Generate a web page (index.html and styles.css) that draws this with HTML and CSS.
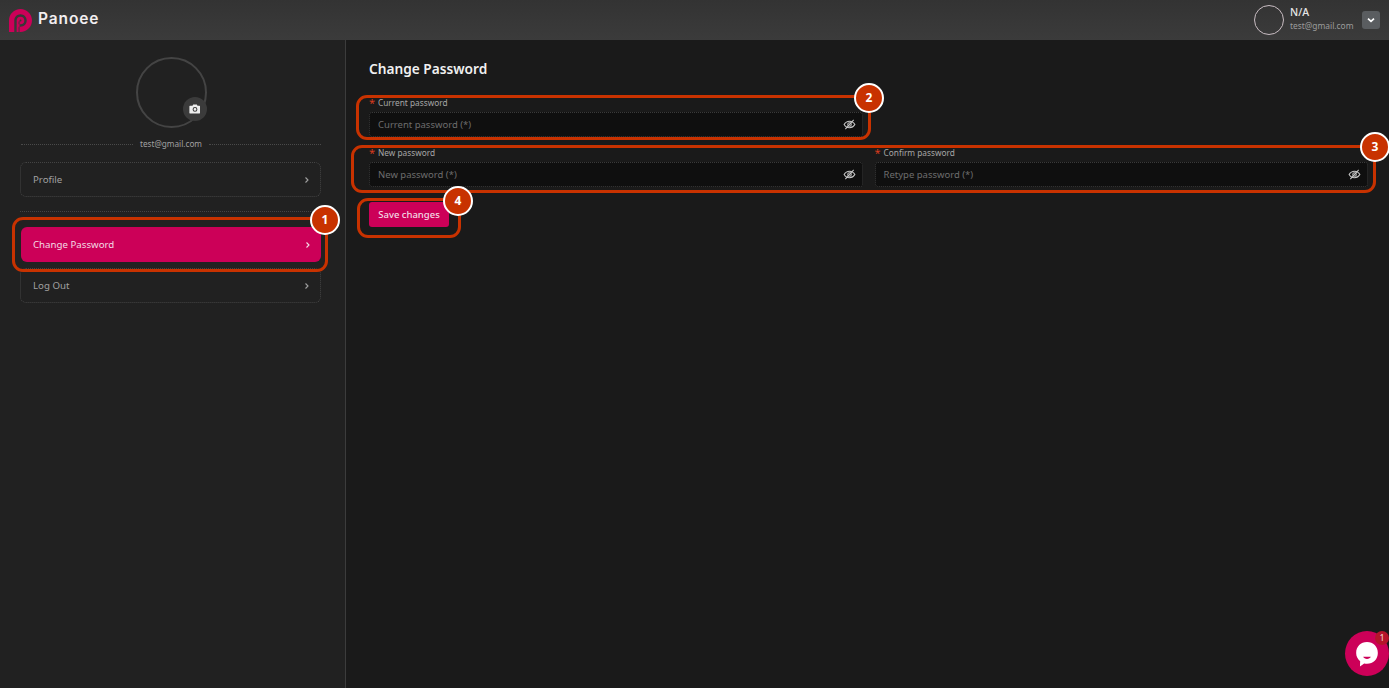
FILE: index.html
```html
<!DOCTYPE html>
<html lang="en">
<head>
<meta charset="utf-8">
<title>Panoee - Change Password</title>
<link rel="stylesheet" href="styles.css">
</head>
<body>
<header class="topbar">
  <div class="brand">
    <svg class="brand-logo" viewBox="0 0 24 24" aria-hidden="true">
      <path fill="#cc0058" fill-rule="evenodd" d="M0 24V12C0 5.400 5.300 0 12 0s12 5.400 12 12-5.400 12-12 12h-2v-5.500h2c3.600 0 6.500-2.900 6.500-6.500S15.600 5.500 12 5.500 5.500 8.400 5.500 12v12zM12 8a4 4 0 0 1 0 8h-2v-3h2a1 1 0 0 0 0-2 1 1 0 0 0-1 1v12H8V12a4 4 0 0 1 4-4z"/>
    </svg>
    <span class="brand-name">Panoee</span>
  </div>
  <div class="account">
    <span class="account-avatar"></span>
    <div class="account-text">
      <span class="account-name">N/A</span>
      <span class="account-mail">test@gmail.com</span>
    </div>
    <button class="account-toggle" type="button" aria-label="Account menu">
      <svg viewBox="0 0 10 10" aria-hidden="true"><path d="M2.500 3.800 5 6.200l2.500-2.400" fill="none" stroke="#fff" stroke-width="1.400"/></svg>
    </button>
  </div>
</header>

<div class="shell">
  <aside class="sidebar">
    <div class="avatar">
      <span class="avatar-camera">
        <svg viewBox="0 0 12 12" aria-hidden="true"><path fill="#eee" fill-rule="evenodd" d="M4.200 1.500h3.600l.7 1.200h2c.3 0 .5.2.5.5v6.800c0 .3-.2.5-.5.5H.9c-.3 0-.5-.2-.5-.5V3.200c0-.3.2-.5.5-.5h2.600zM6 4a2.400 2.400 0 1 0 0 4.800A2.400 2.400 0 0 0 6 4zm0 1a1.400 1.400 0 1 1 0 2.800A1.400 1.400 0 0 1 6 5z"/></svg>
      </span>
    </div>
    <div class="divider"><span>test@gmail.com</span></div>
    <nav class="menu">
      <a class="menu-item menu-profile">Profile<svg class="chev" viewBox="0 0 8 10" aria-hidden="true"><path d="M2.500 2.500 5 5 2.500 7.500"/></svg></a>
      <span class="menu-rule"></span>
      <a class="menu-item menu-active">Change Password<svg class="chev" viewBox="0 0 8 10" aria-hidden="true"><path d="M2.500 2.500 5 5 2.500 7.500"/></svg></a>
      <a class="menu-item menu-logout">Log Out<svg class="chev" viewBox="0 0 8 10" aria-hidden="true"><path d="M2.500 2.500 5 5 2.500 7.500"/></svg></a>
    </nav>
  </aside>

  <main class="content">
    <h1 class="title">Change Password</h1>
    <form class="form">
      <div class="row">
        <div class="field">
          <label class="label"><i>*</i>Current password</label>
          <div class="input"><span>Current password (*)</span>
            <svg class="eye" viewBox="0 0 14 14" aria-hidden="true"><path d="M1.200 7S3.200 3.500 7 3.500 12.800 7 12.800 7 10.800 10.500 7 10.500 1.200 7 1.200 7z"/><circle cx="7" cy="7" r="1.900"/><path d="M2.500 12 11.500 2"/></svg>
          </div>
        </div>
        <div class="field"></div>
      </div>
      <div class="row">
        <div class="field">
          <label class="label"><i>*</i>New password</label>
          <div class="input"><span>New password (*)</span>
            <svg class="eye" viewBox="0 0 14 14" aria-hidden="true"><path d="M1.200 7S3.200 3.500 7 3.500 12.800 7 12.800 7 10.800 10.500 7 10.500 1.200 7 1.200 7z"/><circle cx="7" cy="7" r="1.900"/><path d="M2.500 12 11.500 2"/></svg>
          </div>
        </div>
        <div class="field">
          <label class="label"><i>*</i>Confirm password</label>
          <div class="input"><span>Retype password (*)</span>
            <svg class="eye" viewBox="0 0 14 14" aria-hidden="true"><path d="M1.200 7S3.200 3.500 7 3.500 12.800 7 12.800 7 10.800 10.500 7 10.500 1.200 7 1.200 7z"/><circle cx="7" cy="7" r="1.900"/><path d="M2.500 12 11.500 2"/></svg>
          </div>
        </div>
      </div>
      <button class="save" type="button">Save changes</button>
    </form>
  </main>
</div>

<span class="mark mark-1"></span><span class="num num-1">1</span>
<span class="mark mark-2"></span><span class="num num-2">2</span>
<span class="mark mark-3"></span><span class="num num-3">3</span>
<span class="mark mark-4"></span><span class="num num-4">4</span>

<div class="chat">
  <svg viewBox="0 0 24 24" aria-hidden="true"><path fill="#fff" d="M12 1c5.800 0 10 4.300 10 10s-4.200 10-10 10c-.9 0-1.800-.1-2.600-.3L5.500 23.500l.2-4.900C3.400 16.700 2 14.100 2 11 2 5.300 6.200 1 12 1z"/><path fill="#cc0058" d="M8.500 14.500h7c-.5 1.300-1.900 2-3.500 2s-3-.7-3.500-2z"/></svg>
  <span class="chat-badge">1</span>
</div>
</body>
</html>
```
FILE: styles.css
```css
* { box-sizing: border-box; }
html, body { height: 100%; }
body {
  margin: 0;
  height: 688px;
  overflow: hidden;
  position: relative;
  display: flex;
  flex-direction: column;
  background: #1a1a1a;
  color: #ddd;
  font-family: "Noto Sans", "Open Sans", sans-serif;
}
.topbar {
  height: 40px;
  flex: none;
  display: flex;
  justify-content: space-between;
  align-items: center;
  padding: 0 9px;
  background: linear-gradient(#333333, #3b3b3b);
}
.brand { display: flex; align-items: center; gap: 6px; }
.brand-logo { width: 23px; height: 23px; display: block; }
.brand-name {
  font-family: Inter, sans-serif;
  font-size: 15.500px;
  line-height: 18px;
  padding-bottom: 2px;
  font-weight: 600;
  color: #f2eef0;
  letter-spacing: 0.9px;
}
.account { display: flex; align-items: center; }
.account-avatar {
  width: 30px;
  height: 30px;
  border-radius: 50%;
  border: 1px solid #c8bcc2;
  margin-right: 6px;
}
.account-text { display: flex; flex-direction: column; width: 72px; padding-bottom: 3px; }
.account-name { font-size: 10.500px; line-height: 14px; color: #e6e6e6; font-weight: 500; }
.account-mail { font-size: 8.400px; line-height: 12px; color: #9c9c9c; margin-top: 1px; }
.account-toggle {
  width: 18px;
  height: 18px;
  padding: 3px;
  border: 0;
  border-radius: 3px;
  background: #5a5d60;
  display: flex;
}
.account-toggle svg { width: 12px; height: 12px; }
.shell { flex: 1; display: flex; min-height: 0; }
.sidebar {
  width: 346px;
  flex: none;
  background: #212121;
  border-right: 1px solid #3c3c3c;
  padding: 17px 24px 0 20px;
}
.avatar {
  width: 71px;
  height: 71px;
  margin-left: 116px;
  border-radius: 50%;
  border: 2px solid #444;
  position: relative;
}
.avatar-camera {
  position: absolute;
  right: -2px;
  bottom: 5px;
  width: 24px;
  height: 24px;
  border-radius: 50%;
  background: #3b3b3b;
  display: flex;
  align-items: center;
  justify-content: center;
}
.avatar-camera svg { width: 12px; height: 12px; }
.divider {
  display: flex;
  align-items: center;
  gap: 7px;
  margin-top: 9px;
  padding-left: 1px;
  font-size: 8.200px;
  line-height: 14px;
  color: #a0a0a0;
}
.divider::before, .divider::after {
  content: "";
  flex: 1;
  border-top: 1px dotted #4a4a4a;
}
.menu { display: flex; flex-direction: column; margin-top: 11px; }
.menu-item {
  height: 35px;
  display: flex;
  align-items: center;
  justify-content: space-between;
  padding: 0 9px 0 12px;
  font-size: 9.700px;
  color: #a0a0a0;
  border: 1px dotted #444;
  border-radius: 6px;
}
.menu-rule { display: block; margin-top: 14px; border-top: 1px dotted #444; }
.menu-active {
  margin-top: 15px;
  margin-left: 1px;
  background: #cc0058;
  border: 0;
  color: #f3dbe5;
  height: 35px;
}
.menu-logout { margin-top: 6px; }
.chev { width: 8px; height: 10px; fill: none; stroke: currentColor; stroke-width: 1.100; }
.content { flex: 1; padding: 19px 21px 0 23px; min-width: 0; }
.title {
  margin: 0;
  font-size: 13.700px;
  line-height: 19px;
  font-weight: 600;
  color: #f0f0f0;
}
.form { margin-top: 19px; display: flex; flex-direction: column; }
.row { display: grid; grid-template-columns: 1fr 1fr; gap: 12px; margin-bottom: 10px; }
.label {
  display: flex;
  align-items: center;
  font-size: 8.300px;
  line-height: 12px;
  color: #a6a6a6;
  margin-bottom: 3px;
}
.label i {
  font-style: normal;
  color: #d83a1e;
  width: 9px;
  font-size: 11px;
}
.input {
  height: 25px;
  display: flex;
  align-items: center;
  justify-content: space-between;
  padding: 0 6px 0 8px;
  background: #0f0f0f;
  border: 1px dotted #3a3a3a;
  border-radius: 3px;
  font-size: 9.500px;
  color: #6d6d6d;
}
.eye { width: 13px; height: 13px; fill: none; stroke: #c8c8c8; stroke-width: 1.100; }
.save {
  margin-top: 5px;
  width: 80px;
  height: 25px;
  padding: 0;
  border: 0;
  border-radius: 3px;
  background: #cc0058;
  color: #f3dbe5;
  font: 500 9.500px "Noto Sans", "Open Sans", sans-serif;
}
.mark {
  position: absolute;
  border: 3px solid #c83200;
  border-radius: 11px;
}
.mark-1 { left: 12px; top: 217px; width: 316px; height: 55px; }
.mark-2 { left: 356px; top: 95px; width: 515px; height: 45px; }
.mark-3 { left: 351px; top: 145px; width: 1025px; height: 48px; }
.mark-4 { left: 357px; top: 198px; width: 104px; height: 40px; }
.num {
  position: absolute;
  width: 30px;
  height: 30px;
  border-radius: 50%;
  background: #c83200;
  border: 2px solid #fff;
  color: #fff;
  font-size: 12px;
  font-weight: 700;
  line-height: 26px;
  text-align: center;
}
.num-1 { left: 310px; top: 205px; }
.num-2 { left: 854px; top: 83px; }
.num-3 { left: 1360px; top: 132px; }
.num-4 { left: 443px; top: 186px; }
.chat {
  position: absolute;
  left: 1345px;
  top: 631px;
  width: 44px;
  height: 45px;
  border-radius: 50%;
  background: #cc0058;
  display: flex;
  align-items: center;
  justify-content: center;
}
.chat svg { width: 26px; height: 26px; }
.chat-badge {
  position: absolute;
  right: 0;
  top: 0;
  width: 14px;
  height: 14px;
  border-radius: 50%;
  background: #b5152b;
  color: #f4d8d8;
  font-size: 9px;
  line-height: 14px;
  text-align: center;
}
```
